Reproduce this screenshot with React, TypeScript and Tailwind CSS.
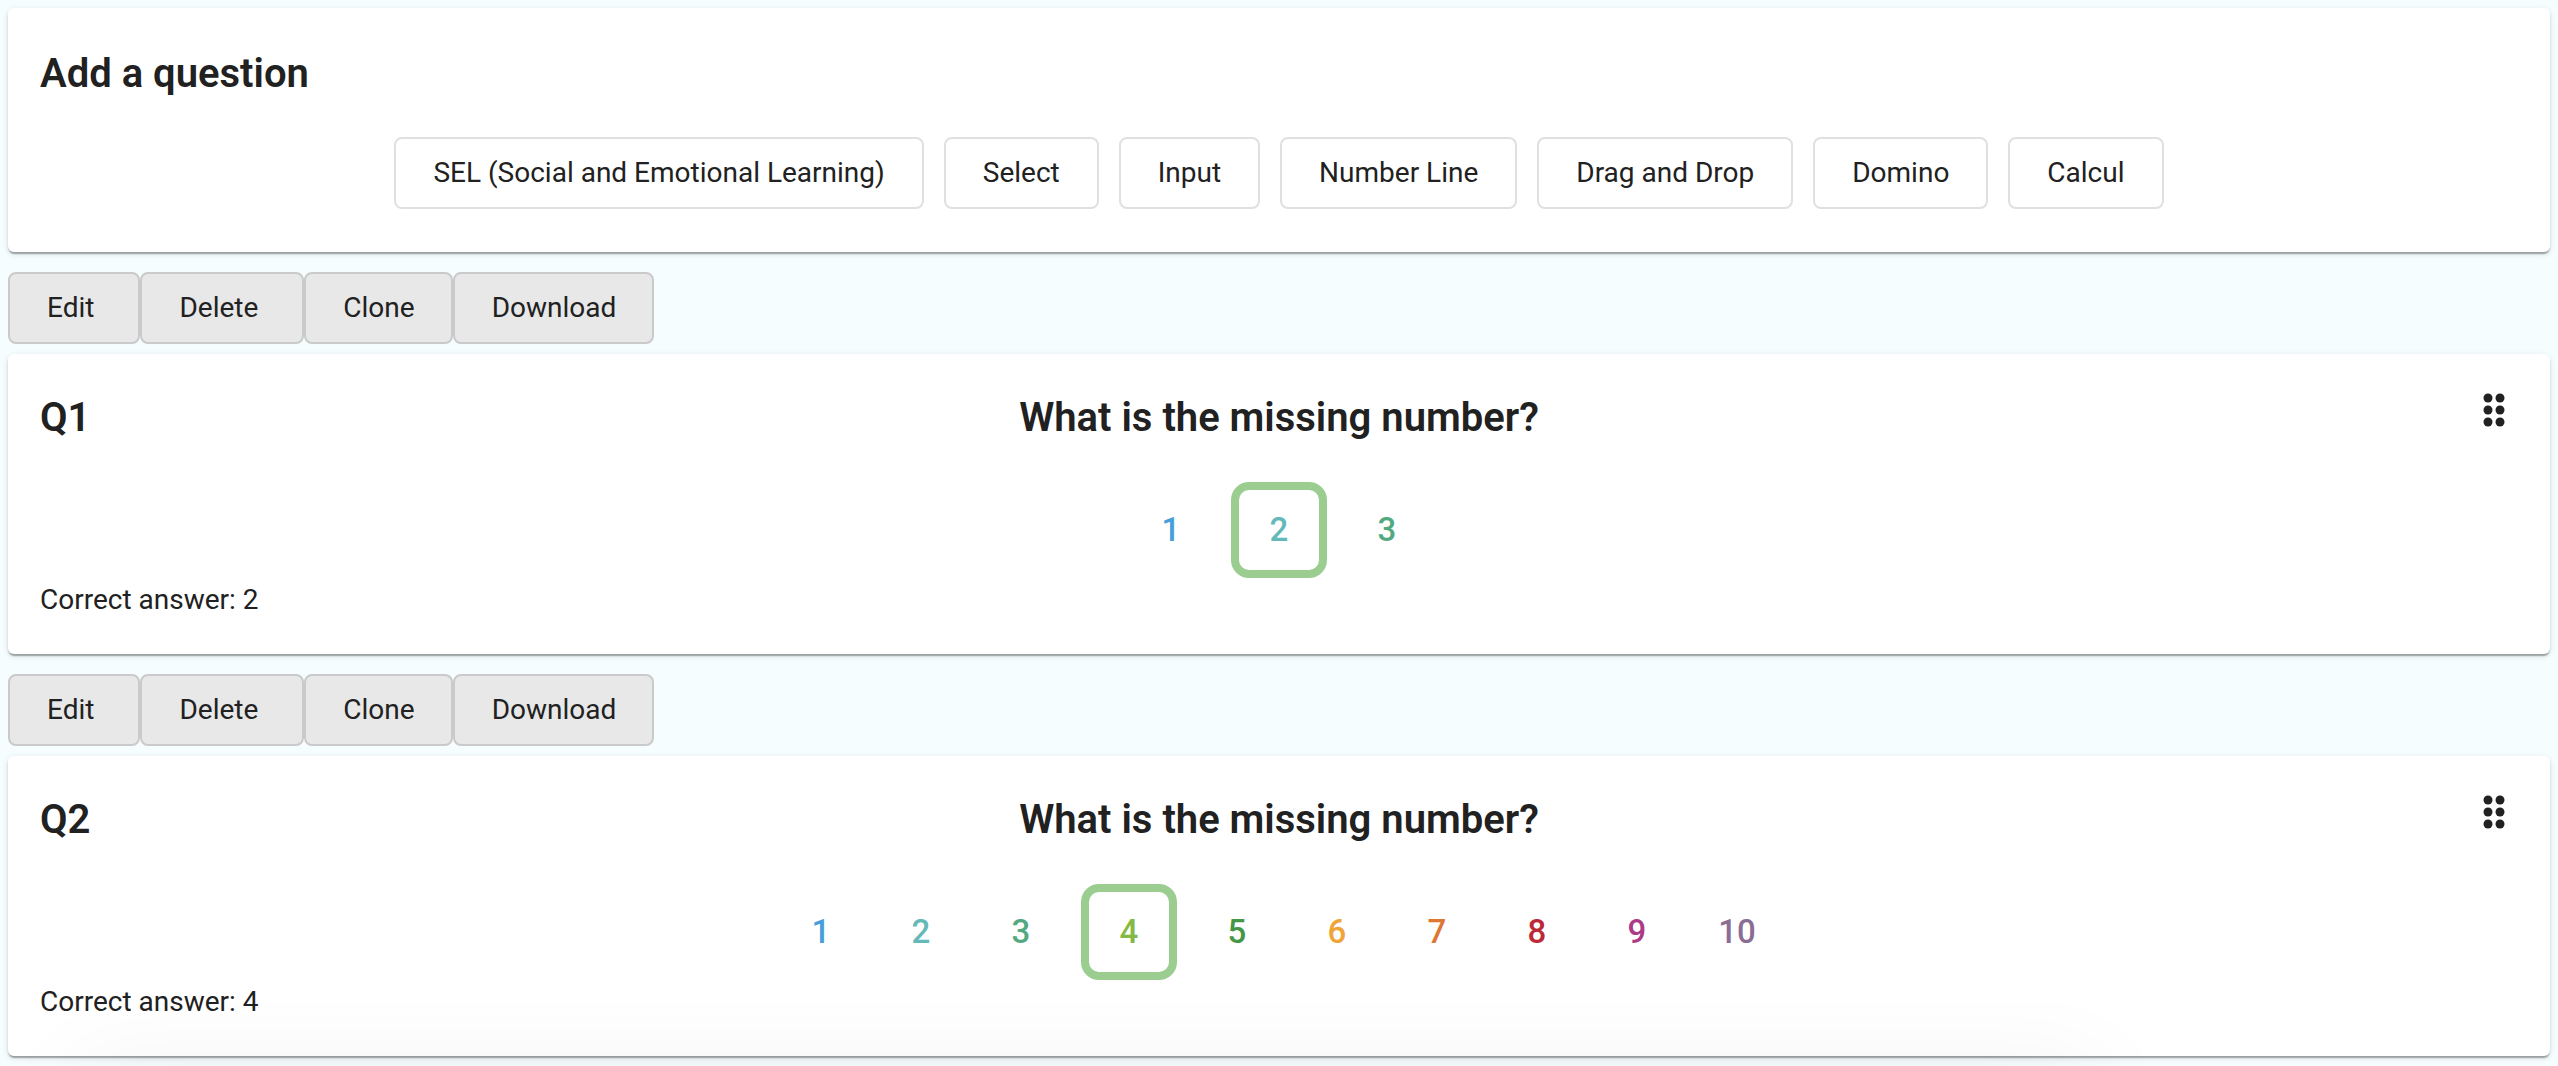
import React from "react";

const types = ["SEL (Social and Emotional Learning)", "Select", "Input", "Number Line", "Drag and Drop", "Domino", "Calcul"];
const actions = [
  { label: "Edit", pad: "pr-11" },
  { label: "Delete", pad: "pr-11" },
  { label: "Clone", pad: "pr-9" },
  { label: "Download", pad: "pr-9" },
];
const colors = ["text-[#469fdb]", "text-[#64b9b9]", "text-[#52a981]", "text-[#84b944]", "text-[#449744]", "text-[#f0a437]", "text-[#df7734]", "text-[#bd2836]", "text-[#ac3a87]", "text-[#8b6d93]"];
const questions = [
  { id: "Q1", count: 3, answer: 2 },
  { id: "Q2", count: 10, answer: 4 },
];
const card = "rounded-[6px] bg-white px-8 shadow-[0_3px_1px_-1px_rgba(0,0,0,0.2),0_2px_2px_rgba(0,0,0,0.14),0_2px_6px_rgba(0,0,0,0.12)]";
const heading = "text-[40px] leading-[40px] font-semibold";

export default function App() {
  return (
    <main className="relative min-h-screen bg-[#f5fdff] p-2 font-['Roboto',sans-serif] text-[28px] leading-8 text-[#212121]">
      <section className={`${card} pt-[46px] pb-[43px]`}>
        <h2 className={heading}>Add a question</h2>
        <div className="mt-[43px] flex justify-center gap-5">
          {types.map((t) => (
            <button key={t} className="h-[72px] rounded-lg border-2 border-[#e0e0e0] bg-white px-[37px] whitespace-nowrap">{t}</button>
          ))}
        </div>
      </section>
      {questions.map((q) => (
        <div key={q.id} className="pt-5">
          <div className="flex">
            {actions.map((a) => (
              <button key={a.label} className={`h-[72px] rounded-lg border-2 border-[#cacaca] bg-[#e8e8e8] pl-[37px] ${a.pad}`}>{a.label}</button>
            ))}
          </div>
          <section className={`${card} mt-[10px] pt-9 pb-[38px]`}>
            <div className="grid grid-cols-[1fr_auto_1fr] items-start">
              <h2 className={`${heading} pt-2`}>{q.id}</h2>
              <h3 className={`${heading} pt-2`}>What is the missing number?</h3>
              <button aria-label="Move question" className="justify-self-end">
                <svg width="48" height="40" viewBox="0 0 48 40" fill="#212121">
                  <circle cx="18" cy="8" r="4.5" />
                  <circle cx="30" cy="8" r="4.5" />
                  <circle cx="18" cy="20" r="4.5" />
                  <circle cx="30" cy="20" r="4.5" />
                  <circle cx="18" cy="32" r="4.5" />
                  <circle cx="30" cy="32" r="4.5" />
                </svg>
              </button>
            </div>
            <div className="mt-11 flex justify-center text-[33px] font-medium">
              {colors.slice(0, q.count).map((c, i) => (
                <span key={c} className={`${c} flex h-24 items-center justify-center ${i + 1 === q.answer ? "mx-[10px] w-24 rounded-[18px] border-8 border-[#9acd8f]" : "w-[100px]"}`}>{i + 1}</span>
              ))}
            </div>
            <p className="mt-[6px]">Correct answer: {q.answer}</p>
          </section>
        </div>
      ))}
      <div className="pointer-events-none absolute inset-x-0 bottom-0 h-16 overflow-hidden">
        <div className="absolute top-full left-[3%] h-24 w-[79%] shadow-[0_0_100px_rgba(0,0,0,0.05)]" />
      </div>
    </main>
  );
}
